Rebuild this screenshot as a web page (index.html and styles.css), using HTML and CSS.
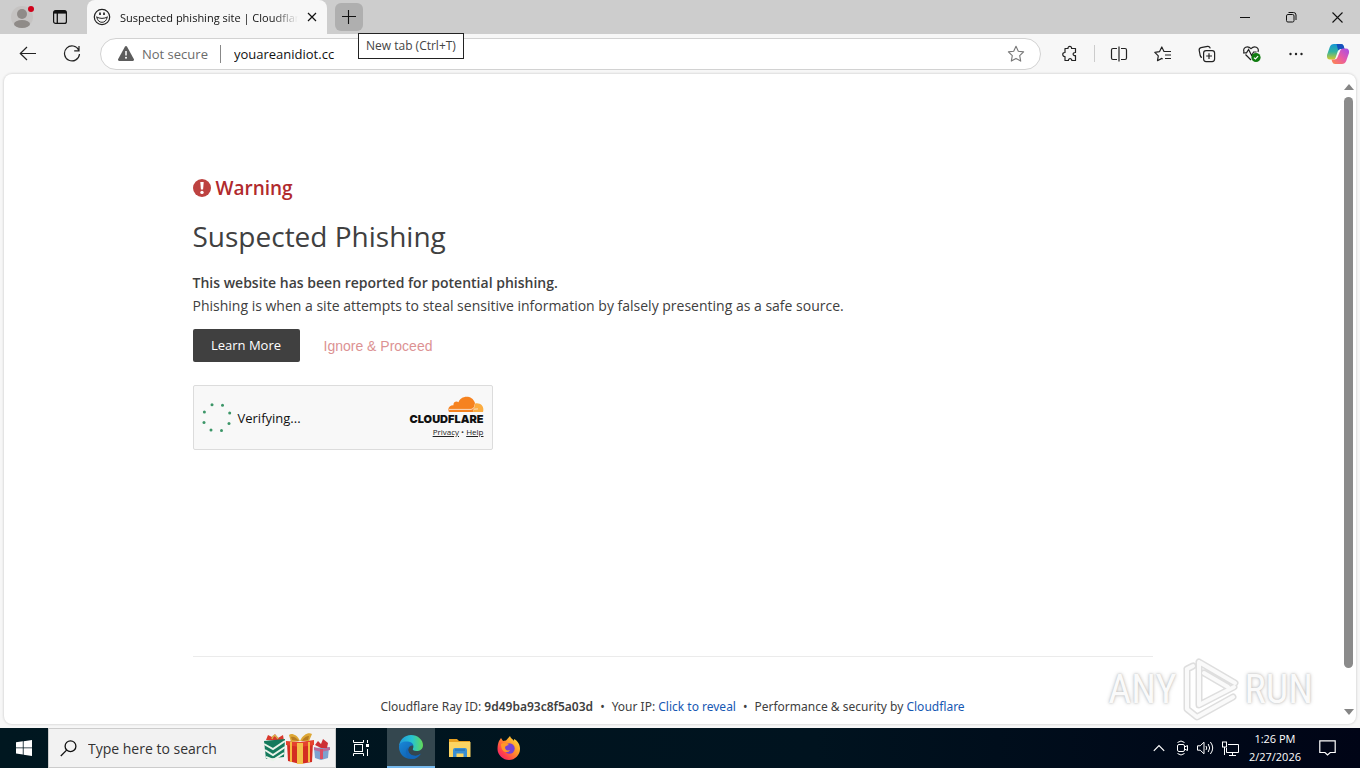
FILE: index.html
```html
<!DOCTYPE html>
<html lang="en">
<head>
  <meta charset="UTF-8">
  <meta name="viewport" content="width=device-width, initial-scale=1.0">
  <title>Suspected phishing site | Cloudflare</title>
  <link rel="stylesheet" href="styles.css">
</head>
<body>

  <div class="browser">
    <!-- tab strip -->
    <header class="tabstrip">
      <div class="strip-left">
        <button class="icon-btn profile" aria-label="Profile">
          <svg width="24" height="24" viewBox="0 0 24 24">
            <circle cx="11" cy="12" r="11" fill="#c5c3c2"/>
            <circle cx="11" cy="9" r="5" fill="#8f8b88"/>
            <ellipse cx="11" cy="19" rx="8" ry="4" fill="#8f8b88"/>
            <circle cx="20" cy="4" r="3" fill="#d0021b"/>
          </svg>
        </button>
        <button class="icon-btn" aria-label="Tab actions">
          <svg width="16" height="16" viewBox="0 0 16 16" fill="none" stroke="#111">
            <rect x="1.6" y="1.6" width="12.8" height="12.8" rx="2" stroke-width="1.2"/>
            <path d="M2 3.2h12" stroke-width="2.8"/>
            <path d="M5.3 4v10" stroke-width="1.3"/>
          </svg>
        </button>
      </div>
      <div class="tab">
        <svg width="18" height="18" viewBox="0 0 18 18" fill="none" stroke="#222" stroke-width="1.2">
          <circle cx="9" cy="9" r="7.7"/>
          <path d="M3.2 8.800Q9 12 14.800 8.800M3.800 9.300q1.200 5 5.200 5t5.200-5" stroke-width="1"/>
          <path d="M7 4.600v2.400M11 4.600v2.400" stroke-width="1.700"/>
        </svg>
        <span class="tab-title">Suspected phishing site | Cloudflare</span>
        <button class="icon-btn" aria-label="Close tab">
          <svg width="10" height="10" viewBox="0 0 10 10" stroke="#111" stroke-width="1.2"><path d="M1 1l8 8M9 1l-8 8"/></svg>
        </button>
      </div>
      <div class="newtab-wrap">
        <button class="newtab" aria-label="New tab">
          <svg width="14" height="14" viewBox="0 0 14 14" stroke="#111" stroke-width="1.1"><path d="M6.500 0v14M0 6.500h14"/></svg>
        </button>
        <div class="tooltip">New tab (Ctrl+T)</div>
      </div>
      <div class="window-controls">
        <button class="icon-btn" aria-label="Minimize">
          <svg width="10" height="10" viewBox="0 0 10 10" stroke="#111"><path d="M0 5.5h10"/></svg>
        </button>
        <button class="icon-btn" aria-label="Restore">
          <svg width="11" height="11" viewBox="0 0 11 11" fill="none" stroke="#111"><rect x=".5" y="2.500" width="7.500" height="7.500" rx="1.400"/><path d="M2.500.5h5q2.500 0 2.500 2.500v5"/></svg>
        </button>
        <button class="icon-btn" aria-label="Close">
          <svg width="11" height="11" viewBox="0 0 11 11" stroke="#111" stroke-width="1.1"><path d="M.5.5l10 10M10.5.5l-10 10"/></svg>
        </button>
      </div>
    </header>

    <!-- toolbar -->
    <div class="toolbar">
      <div class="nav">
        <button class="icon-btn" aria-label="Back">
          <svg width="18" height="16" viewBox="0 0 18 16" fill="none" stroke="#222" stroke-width="1.2"><path d="M17 7.500H1.500M8 1L1.300 7.500L8 14"/></svg>
        </button>
        <button class="icon-btn" aria-label="Refresh">
          <svg width="18" height="18" viewBox="0 0 18 18" fill="none" stroke="#222" stroke-width="1.2"><path d="M15.8 5.2A7.5 7.5 0 1 0 16.5 9M16 1v4.8h-4.8"/></svg>
        </button>
      </div>
      <div class="address">
        <svg width="16" height="15" viewBox="0 0 16 15"><path d="M8 0q.7 0 1.100.7l6.700 12.400q.7 1.400-.9 1.900H1.100q-1.600-.5-.9-1.900L6.900.7Q7.300 0 8 0z" fill="#5c5c5c"/><path d="M8 5v4.600" stroke="#fff" stroke-width="1.500"/><circle cx="8" cy="11.700" r="1" fill="#fff"/></svg>
        <label class="secure" for="url">Not secure</label>
        <input class="url" id="url" type="text" value="youareanidiot.cc">
        <button class="icon-btn" aria-label="Add to favorites">
          <svg width="18" height="18" viewBox="0 0 18 18" fill="none" stroke="#777" stroke-width="1.1" stroke-linejoin="round"><path d="M9 1.300l2.300 5 5.300.6-3.900 3.700 1 5.500L9 13.400l-4.700 2.700 1-5.500L1.400 6.900l5.300-.6z"/></svg>
        </button>
      </div>
      <div class="tools">
        <button class="icon-btn" aria-label="Extensions">
          <svg width="18" height="18" viewBox="0 0 18 18" fill="none" stroke="#222" stroke-width="1.2"><path d="M4 3.500h3C6.700.6 10.900.6 10.600 3.500h3.900v4c-3.200-.3-3.200 3.500 0 3.200v4.800h-3.700c.2-2.500-3.600-2.500-3.400 0H4v-4C1 11.800 1 7.200 4 7.500z" stroke-linejoin="round"/></svg>
        </button>
        <span class="divider"></span>
        <button class="icon-btn" aria-label="Split screen">
          <svg width="18" height="18" viewBox="0 0 18 18" fill="none" stroke="#222" stroke-width="1.200"><path d="M9 1.500v15M7 3.500H3q-1.500 0-1.500 1.500v8q0 1.500 1.500 1.500h4M11 3.500h4q1.500 0 1.500 1.500v8q0 1.500-1.500 1.500h-4"/></svg>
        </button>
        <button class="icon-btn" aria-label="Favorites">
          <svg width="18" height="18" viewBox="0 0 18 18" fill="none" stroke="#222" stroke-width="1.200" stroke-linejoin="round"><path d="M10 6.500h0L7.800 2 5.600 6.600l-4.800.7 3.500 3.500-.8 4.900 4.300-2.300.9.500M7.800 2l2.200 4.500h7M11 10h6M11 13.500h6"/></svg>
        </button>
        <button class="icon-btn" aria-label="Collections">
          <svg width="18" height="18" viewBox="0 0 18 18" fill="none" stroke="#222" stroke-width="1.200"><rect x="5.600" y="5.600" width="11" height="11" rx="2.500"/><path d="M11 8.200v5.800M8.200 11h5.800M4 12.500Q2.600 12.200 2.200 10.500L1.200 5.300Q.9 3.200 3 2.700l6.500-1.300q2.300-.4 2.800 2"/></svg>
        </button>
        <button class="icon-btn" aria-label="Browser essentials">
          <svg width="20" height="20" viewBox="0 0 20 20" fill="none" stroke="#222" stroke-width="1.200"><path d="M2 8C.5 3.500 5.500 1 9 4.600 12.500 1 17.500 3.500 16 8M3.500 10.500L9 16M1 8.800h3.500L6.600 5.500l3 6 2-3.500h3"/><circle cx="14" cy="13.500" r="4.600" fill="#107c10" stroke="none"/><path d="M11.900 13.600l1.500 1.400 2.700-2.800" stroke="#fff"/></svg>
        </button>
        <button class="icon-btn" aria-label="Settings and more">
          <svg width="16" height="4" viewBox="0 0 16 4" fill="#222"><circle cx="2.500" cy="2" r="1.200"/><circle cx="8" cy="2" r="1.200"/><circle cx="13.500" cy="2" r="1.200"/></svg>
        </button>
        <button class="icon-btn copilot" aria-label="Copilot">
          <svg width="24" height="22" viewBox="0 0 24 22">
            <defs>
              <linearGradient id="cpA" x1="0" y1="0" x2="0" y2="1"><stop offset="0" stop-color="#1597d5"/><stop offset=".5" stop-color="#32b3a0"/><stop offset="1" stop-color="#d4ca2c"/></linearGradient>
              <linearGradient id="cpB" x1="1" y1="0" x2="0" y2="1"><stop offset="0" stop-color="#a34dea"/><stop offset=".5" stop-color="#e85aa5"/><stop offset="1" stop-color="#ff8a48"/></linearGradient>
            </defs>
            <path d="M8 1h7q2 0 2.700 2l.8 3h-4q-2 0-2.700 2.200L9.500 15q-.6 1.500-2 1.500H4Q.5 16.500 1 12L3.800 4Q4.800 1 8 1z" fill="url(#cpA)"/>
            <path d="M10.500 1H15q2 0 2.700 2l.8 3h-4q-1.700 0-2.300 1.500z" fill="#1750bd"/>
            <path d="M16 21H9q-2 0-2.700-2l-.8-2.500h3q2.200 0 3-2.300L14.500 7q.6-1.500 2.500-1.500h3q3.500 0 3 4.500L20.200 18Q19 21 16 21z" fill="url(#cpB)"/>
          </svg>
        </button>
      </div>
    </div>

    <!-- page -->
    <div class="viewport">
      <div class="page">
        <main class="content">
          <h2 class="warning">
            <svg width="18" height="18" viewBox="0 0 18 18"><circle cx="9" cy="9" r="9" fill="#bd4240"/><path d="M7.300 3h3.400l-.6 7.500H7.900z" fill="#fff"/><circle cx="9" cy="13.400" r="1.700" fill="#fff"/></svg>
            Warning
          </h2>
          <h1>Suspected Phishing</h1>
          <p class="lead"><strong>This website has been reported for potential phishing.</strong></p>
          <p class="lead">Phishing is when a site attempts to steal sensitive information by falsely presenting as a safe source.</p>
          <div class="actions">
            <a class="learn" href="#">Learn More</a>
            <button class="ignore" disabled>Ignore &amp; Proceed</button>
          </div>
          <div class="turnstile">
            <svg class="spinner" width="30" height="30" viewBox="0 0 30 30" fill="#3c9668">
              <circle cx="10" cy="1.800" r="1.500"/><circle cx="20.500" cy="2.200" r="1.500"/><circle cx="27.700" cy="10" r="1.500"/><circle cx="27" cy="20.500" r="1.500"/>
              <circle cx="19.500" cy="27.500" r="1.500"/><circle cx="9" cy="27" r="1.500"/><circle cx="2" cy="19.500" r="1.500"/><circle cx="2.400" cy="9" r="1.500"/>
            </svg>
            <span class="verifying">Verifying...</span>
            <div class="brand">
              <svg width="36" height="17" viewBox="0 0 36 17">
                <path d="M1 16C-1 12 2 9 5.500 9.300 5 6 8.500 4.500 10.500 6.300 12.500-.5 24-2 27 7l-2 9z" fill="#f6821f"/>
                <path d="M25 16l2.200-8.500C33 6.500 36.500 11 35 16z" fill="#fbad41"/>
                <path d="M1 13.400h22q2 0 2.600-2M26 13.200l4-.3" stroke="#fbe3cf" stroke-width=".9" fill="none"/>
              </svg>
              <span class="brand-name">CLOUDFLARE</span>
              <span class="brand-links"><a href="#">Privacy</a> • <a href="#">Help</a></span>
            </div>
          </div>
        </main>
        <footer class="page-footer">
          <span>Cloudflare Ray ID: <strong>9d49ba93c8f5a03d</strong></span>
          <span>•</span>
          <span>Your IP: <a href="#">Click to reveal</a></span>
          <span>•</span>
          <span>Performance &amp; security by <a href="#">Cloudflare</a></span>
        </footer>
      </div>
      <div class="scrollbar">
        <span class="arrow up"></span>
        <span class="thumb"></span>
        <span class="arrow down"></span>
      </div>
      <div class="watermark">
        <span>ANY</span>
        <svg width="58" height="64" viewBox="0 0 58 64" fill="none" stroke-linejoin="round" stroke-linecap="round">
          <path class="mark-edge" d="M17 5L53 26M17 5v43L52 30M22 16l24 14M5 12l6-3M5 12v40l10 8 36-20" stroke-width="7"/>
          <path class="mark-top" d="M17 5L53 26M17 5v43L52 30M22 16l24 14M5 12l6-3M5 12v40l10 8 36-20" stroke-width="4"/>
        </svg>
        <span>RUN</span>
      </div>
    </div>
  </div>

  <!-- taskbar -->
  <div class="taskbar">
    <button class="task start" aria-label="Start">
      <svg width="16" height="16" viewBox="0 0 16 16" fill="#fff"><path d="M0 2.300l6.800-1v6.200H0zM7.600 1.200L16 0v7.500H7.600zM0 8.300h6.800v6.200l-6.800-1zM7.600 8.300H16V16l-8.400-1.200z"/></svg>
    </button>
    <div class="search">
      <svg width="17" height="17" viewBox="0 0 17 17" fill="none" stroke="#111" stroke-width="1.300"><circle cx="10.500" cy="6.200" r="5.400"/><path d="M6.600 10.100L.8 16"/></svg>
      <input type="text" aria-label="Search" placeholder="Type here to search">
      <svg width="68" height="34" viewBox="0 0 68 34">
        <path d="M3 9l2-5 4 2 3-3 3 4 5-3 1 6z" fill="#d9382c"/>
        <path d="M9 8q2-7 6 0" stroke="#d8b14a" fill="none" stroke-width="1.500"/>
        <path d="M1 10l21-2-1 18-18 2z" fill="#147a5c"/>
        <path d="M1 13l9 5 12-8M2 19l8 5 12-8M3 26l7 3 11-7" stroke="#e9f3e9" stroke-width="2" fill="none"/>
        <path d="M24 12l26-1-1 20-12 2-12-3z" fill="#d42d22"/>
        <path d="M23 10l14 1 14-2v5l-14 2-14-2z" fill="#e5422e"/>
        <path d="M28 11v20M46 11v20" stroke="#f6b942" stroke-width="2"/>
        <path d="M34 12h6v21h-6z" fill="#f3c04a"/>
        <path d="M37 10C34 3 28 2 26 4l2 7zM37 10C40 3 46 1 49 3l-3 7z" fill="#dda735"/>
        <path d="M36 10C33 6 30 5 28 6l1 3zM39 10C41 6 44 5 46 5l-1 4z" fill="#b77c22"/>
        <path d="M51 17l15-1-1 11-7 2-6-2z" fill="#7da2cf"/>
        <path d="M51 16l7 2 9-2v3l-9 2-7-2z" fill="#b86c9c"/>
        <path d="M57 18h3v10h-3z" fill="#d95064"/>
        <path d="M58 17l-6-3 3-4 3 3 2-5 5 4-1 5z" fill="#ce3036"/>
      </svg>
    </div>
    <button class="task" aria-label="Task view">
      <svg width="18" height="16" viewBox="0 0 18 16" fill="none" stroke="#fff"><path d="M.5 0v2.500h10V0M.5 16v-2.500h10V16M14.500 0v3M14.500 9v7"/><rect x="1.500" y="4.500" width="8" height="7"/><path d="M13 5.500h3" stroke-width="3"/></svg>
    </button>
    <button class="task active" aria-label="Microsoft Edge">
      <svg width="24" height="24" viewBox="0 0 24 24">
        <defs>
          <linearGradient id="edA" x1="0" x2="1"><stop offset="0" stop-color="#2199dc"/><stop offset=".55" stop-color="#27c4d0"/><stop offset="1" stop-color="#62d957"/></linearGradient>
          <linearGradient id="edB" x1="0" y1="0" x2="1" y2="1"><stop offset="0" stop-color="#1988d8"/><stop offset="1" stop-color="#0c55a4"/></linearGradient>
        </defs>
        <path d="M0 12C0 5 5.500 0 12 0c7 0 12 5 12 10 0 4-3 6-6.500 6-3 0-4.300-1-3.500-2.500 1.500-3-1-6-5-6C4 7.500 0 9 0 12z" fill="url(#edA)"/>
        <path d="M0 12C0 7 5 6 9 6.500c3 .3 5 2 5.500 4-5-1-8 6-2.500 9.500 3.500 2 7 1 9.500-1C19 22 16 24 12 24 5 24 0 18.500 0 12z" fill="url(#edB)"/>
        <path d="M10 12c-2 3 0 7.500 4.500 8.500 3 .6 5.500-.5 7.500-2-2 3.500-5 5.500-9 5.500-7-2-8-9-3-12z" fill="#1266b8"/>
      </svg>
    </button>
    <button class="task" aria-label="File Explorer">
      <svg width="22" height="20" viewBox="0 0 22 20"><path d="M0 1h8l2 2h11v5H0z" fill="#e8a020"/><path d="M0 4h21.500v15H0z" fill="#fcd462"/><path d="M4 19v-7q0-2 2-2h10q2 0 2 2v7h-3.500v-3.500h-7V19z" fill="#3b8fd3"/><path d="M6 12h10" stroke="#2069a8"/></svg>
    </button>
    <button class="task" aria-label="Firefox">
      <svg width="24" height="24" viewBox="0 0 24 24">
        <defs><linearGradient id="ffA" x1="1" y1="0" x2="0" y2="1"><stop offset="0" stop-color="#fff044"/><stop offset=".4" stop-color="#ff9a28"/><stop offset=".75" stop-color="#ff3c4c"/><stop offset="1" stop-color="#e3158d"/></linearGradient></defs>
        <path d="M2 5l2-3 2 3 3-.5L13 0c1 3 3 3 4 5V3c4 2 6 6 6 10 0 6-5 11-11 11S.5 19 .5 13C.5 10 1 7 2 5z" fill="url(#ffA)"/>
        <circle cx="12.500" cy="12.500" r="5.200" fill="#7542d5"/>
        <path d="M4 8c3-2 6-1 8 1-2 0-3 1-4 2 0 3 2 4 5 3-2 4-9 3-9-6z" fill="#ff9728"/>
      </svg>
    </button>
    <div class="tray">
      <svg width="12" height="8" viewBox="0 0 12 8" fill="none" stroke="#fff" stroke-width="1.200"><path d="M.8 6.800L6 1.500l5.200 5.300"/></svg>
      <svg width="14" height="16" viewBox="0 0 14 16" fill="none" stroke="#fff"><rect x="2.500" y="4.500" width="7" height="7" rx="1.500"/><path d="M9.500 7l3-1.500v5l-3-1.500M2.500 2.500Q6 -.5 9.500 2.500M2.500 13.500Q6 16.500 9.500 13.500"/></svg>
      <svg width="17" height="14" viewBox="0 0 17 14" fill="none" stroke="#fff"><path d="M.5 4.800h2.700L7 1.200v11.600L3.200 9.200H.5zM9 5q1.500 2 0 4M11.200 3q3 4 0 8M13.400 1q4.600 6 0 12"/></svg>
      <svg width="17" height="15" viewBox="0 0 17 15" fill="none" stroke="#fff"><path d="M6 3.500h10.500v8H4.500V7M10.500 11.500v3M7 14.500h7M2.500 6v8"/><rect x=".5" y="1" width="4" height="5"/></svg>
      <div class="clock"><span>1:26 PM</span><span>2/27/2026</span></div>
      <svg width="17" height="16" viewBox="0 0 17 16" fill="none" stroke="#fff" stroke-width="1.200"><path d="M.8.8h15.400v11.700h-5L8.500 15 6 12.500H.8z"/></svg>
    </div>
  </div>

</body>
</html>
```
FILE: styles.css
```css
* {
  box-sizing: border-box;
}

body {
  margin: 0;
  min-height: 100vh;
  display: flex;
  flex-direction: column;
  font-family: 'Open Sans', 'Noto Sans', sans-serif;
  font-size: 13px;
  color: #222;
  background: #f7f7f7;
}

button, input {
  font-family: inherit;
  border: none;
  padding: 0;
  margin: 0;
  background: none;
}

svg {
  display: block;
  flex: none;
}

h1, h2, p {
  margin: 0;
}

.browser {
  flex: 1;
  display: flex;
  flex-direction: column;
}

.icon-btn {
  display: flex;
  align-items: center;
  justify-content: center;
}

/* tab strip */
.tabstrip {
  height: 34px;
  display: flex;
  background: #cdcdcd;
}

.strip-left {
  width: 87px;
  padding-left: 11px;
  display: flex;
  align-items: center;
  gap: 17px;
}

.tab {
  width: 240px;
  padding: 0 10px 0 6px;
  display: flex;
  align-items: center;
  gap: 9px;
  background: #f7f7f7;
  border-radius: 8px 8px 0 0;
}

.tab-title {
  flex: 1;
  font-size: 11px;
  color: #111;
  overflow: hidden;
  white-space: nowrap;
  mask-image: linear-gradient(to right, #000 86%, transparent);
}

.newtab-wrap {
  position: relative;
  padding: 3px 8px;
}

.newtab {
  width: 28px;
  height: 28px;
  display: flex;
  align-items: center;
  justify-content: center;
  background: #afafaf;
  border-radius: 6px;
}

.tooltip {
  position: absolute;
  left: 31px;
  top: 33px;
  z-index: 2;
  padding: 3px 7px;
  border: 1px solid #222;
  background: #fff;
  font-size: 12px;
  line-height: 18px;
  white-space: nowrap;
  color: #444;
}

.window-controls {
  margin-left: auto;
  display: flex;
}

.window-controls .icon-btn {
  width: 46px;
}

/* toolbar */
.toolbar {
  height: 39px;
  display: flex;
  align-items: center;
  padding-right: 10px;
}

.nav {
  width: 100px;
  padding-left: 19px;
  display: flex;
  align-items: center;
  gap: 26px;
}

.address {
  flex: 1;
  height: 32px;
  padding: 0 15px 0 17px;
  display: flex;
  align-items: center;
  gap: 8px;
  background: #fff;
  border: 1px solid #d2d2d2;
  border-radius: 16px;
}

.secure {
  padding-right: 12px;
  border-right: 1px solid #888;
  line-height: 18px;
  color: #6b6b6b;
}

.url {
  flex: 1;
  padding-left: 5px;
  font-size: 13px;
  color: #111;
}

.tools {
  display: flex;
  align-items: center;
  gap: 26px;
  padding-left: 20px;
}

.divider {
  width: 1px;
  height: 17px;
  margin: 0 -11px;
  background: #ccc;
}

.copilot {
  margin-left: -4px;
}

/* page */
.viewport {
  position: relative;
  flex: 1;
  margin: 1px 4px 4px;
  display: flex;
  background: #fff;
  border-radius: 8px;
  box-shadow: 0 0 2px 1px #ddd;
}

.page {
  flex: 1;
  display: flex;
  flex-direction: column;
  padding: 99px 24px 0;
  color: #404040;
}

.content {
  width: 100%;
  max-width: 960px;
  margin: 0 auto;
  flex: 1;
}

.warning {
  display: flex;
  align-items: center;
  gap: 5px;
  font-size: 19px;
  line-height: 30px;
  font-weight: 600;
  color: #b12a2d;
}

h1 {
  margin-top: 13px;
  font-size: 28px;
  line-height: 40px;
  font-weight: 400;
}

.lead {
  font-size: 14px;
  line-height: 23px;
}

h1 + .lead {
  margin-top: 15px;
}

strong {
  font-weight: 600;
}

.actions {
  display: flex;
  align-items: center;
  gap: 24px;
  margin-top: 12px;
}

.learn {
  width: 107px;
  line-height: 33px;
  text-align: center;
  background: #404040;
  border-radius: 2px;
  color: #fff;
  text-decoration: none;
}

.ignore {
  font-family: 'Liberation Sans', sans-serif;
  font-size: 14px;
  color: #dc9293;
}

.turnstile {
  width: 300px;
  height: 65px;
  margin-top: 23px;
  padding: 0 8px;
  display: flex;
  align-items: center;
  background: #f8f8f8;
  border: 1px solid #dcdcdc;
  border-radius: 2px;
}

.verifying {
  margin-left: 6px;
  font-size: 13px;
  color: #111;
}

.brand {
  margin-left: auto;
  display: flex;
  flex-direction: column;
  align-items: flex-end;
}

.brand-name {
  font-family: Inter, sans-serif;
  font-size: 11px;
  line-height: 12px;
  font-weight: 900;
  color: #111;
}

.brand-links {
  font-size: 8px;
  line-height: 14px;
}

.brand-links a {
  color: #222;
}

.page-footer {
  width: 100%;
  max-width: 960px;
  margin: 0 auto;
  padding: 40px 0 7px;
  display: flex;
  justify-content: center;
  gap: 7px;
  border-top: 1px solid #ebebeb;
  font-family: 'Noto Sans', sans-serif;
  font-size: 12px;
  line-height: 20px;
}

.page-footer a {
  color: #1658b3;
  text-decoration: none;
}

.scrollbar {
  width: 15px;
  padding: 10px 3px 9px;
  display: flex;
  flex-direction: column;
  align-items: center;
}

.arrow {
  border: 5px solid transparent;
  border-top-width: 0;
  border-bottom: 6px solid #858585;
}

.down {
  border-top: 6px solid #858585;
  border-bottom-width: 0;
}

.thumb {
  flex: 1;
  width: 9px;
  margin: 7px 0 41px;
  background: #8b8b8b;
  border-radius: 5px;
}

.watermark {
  position: absolute;
  right: 43px;
  bottom: 3px;
  display: flex;
  align-items: center;
  gap: 5px;
  font-family: 'Liberation Sans Narrow', 'Roboto Condensed', Roboto, sans-serif;
  font-size: 40px;
  font-weight: 400;
  color: #fafafa;
  text-shadow: 0 0 2px #bbb, 0 0 4px #ccc;
}

.mark-edge {
  stroke: #dedede;
}

.mark-top {
  stroke: #fafafa;
}

/* taskbar */
.taskbar {
  height: 40px;
  display: flex;
  background: linear-gradient(to right, #001720, #00131f 60%, #000416);
}

.task {
  width: 48px;
  display: flex;
  align-items: center;
  justify-content: center;
  margin-right: 1px;
}

.start {
  margin-right: 0;
}

.active {
  background: #34474f;
  border-bottom: 2px solid #76b9ed;
}

.search {
  width: 288px;
  margin-right: 2px;
  padding: 0 4px 0 11px;
  display: flex;
  align-items: center;
  gap: 11px;
  background: #f2f2f2;
  border: 1px solid #ccc;
}

.search input {
  flex: 1;
  min-width: 0;
  font-size: 14px;
}

.search input::placeholder {
  color: #333;
}

.tray {
  margin-left: auto;
  padding-right: 24px;
  display: flex;
  align-items: center;
  gap: 10px;
  color: #fff;
}

.tray > svg:nth-child(n+3) {
  margin-left: -2px;
}

.clock {
  display: flex;
  flex-direction: column;
  align-items: center;
  font-size: 11px;
  line-height: 18px;
  padding-right: 10px;
}
```
